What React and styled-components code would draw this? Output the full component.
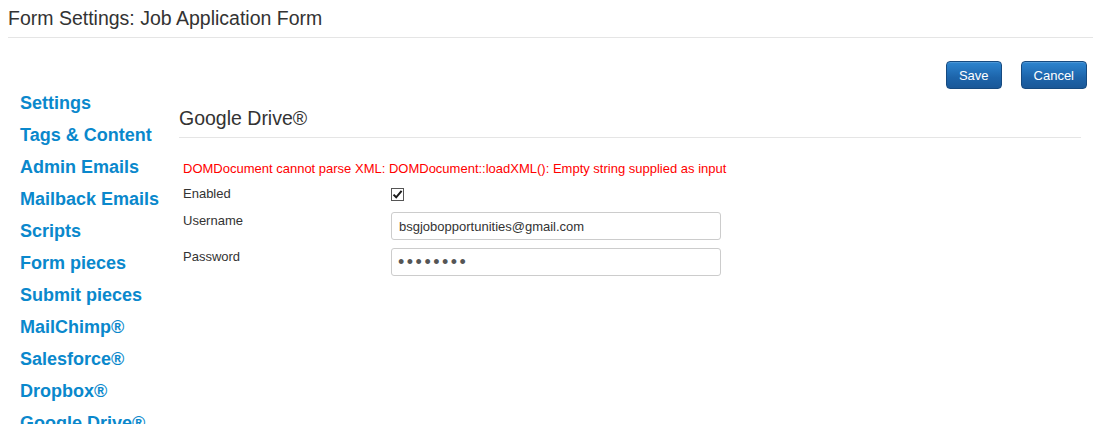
import React from "react";
import styled, { createGlobalStyle } from "styled-components";

const GlobalStyle = createGlobalStyle`
  html, body { background: #ffffff; }
  body {
    margin: 8px;
    font-family: "Liberation Sans", Arial, sans-serif;
    color: #333333;
  }
  * { box-sizing: border-box; }
`;

const Page = styled.div`
  display: flex;
  flex-direction: column;
`;

const PageTitle = styled.h1`
  margin: 0;
  font-size: 19.5px;
  font-weight: normal;
  line-height: 21px;
  color: #333333;
  padding-bottom: 8px;
  border-bottom: 1px solid #e5e5e5;
`;

const Toolbar = styled.div`
  display: flex;
  justify-content: flex-end;
  gap: 19px;
  margin-top: 23px;
  padding-right: 6px;
`;

const Button = styled.button`
  height: 28px;
  padding: 0 12px;
  font-family: "Liberation Sans", Arial, sans-serif;
  font-size: 13px;
  color: #ffffff;
  border: 1px solid #164a80;
  border-radius: 4px;
  background: linear-gradient(to bottom, #2d85d0 0%, #1d64aa 60%, #1a5898 100%);
  box-shadow: inset 0 1px 0 rgba(255, 255, 255, 0.15);
  cursor: pointer;
`;

const Body = styled.div`
  display: flex;
  align-items: flex-start;
  margin-top: -2px;
  padding-left: 12px;
  padding-right: 12px;
`;

const Nav = styled.nav`
  display: flex;
  flex-direction: column;
  width: 159px;
  flex: none;
`;

const NavLink = styled.a`
  display: block;
  font-size: 18px;
  font-weight: bold;
  line-height: 32px;
  color: #0a88cc;
  text-decoration: none;
  white-space: nowrap;
`;

const Main = styled.section`
  flex: 1;
  display: flex;
  flex-direction: column;
  padding-top: 21px;
`;

const SectionTitle = styled.h2`
  margin: 0;
  font-size: 19.5px;
  font-weight: normal;
  line-height: 21px;
  color: #333333;
  padding-bottom: 8px;
  border-bottom: 1px solid #e5e5e5;
`;

const Form = styled.div`
  display: flex;
  flex-direction: column;
  padding: 22px 0 0 4px;
`;

const ErrorText = styled.div`
  font-size: 13px;
  line-height: 18px;
  color: #ff0000;
  margin-bottom: 7px;
`;

const Row = styled.div`
  display: grid;
  grid-template-columns: 208px 330px;
  align-items: start;
  min-height: ${(p) => p.$minH || 0}px;
  margin-bottom: 8px;
`;

const Label = styled.label`
  font-size: 13px;
  line-height: 18px;
  color: #333333;
`;

const CheckBox = styled.span`
  display: inline-flex;
  align-items: center;
  justify-content: center;
  width: 13px;
  height: 13px;
  margin-top: 3px;
  border: 1px solid #555555;
  background: #ffffff;
`;

const Input = styled.input`
  width: 330px;
  height: 28px;
  padding: 0 7px;
  font-family: "Liberation Sans", Arial, sans-serif;
  font-size: 13px;
  color: #333333;
  border: 1px solid #cccccc;
  border-radius: 3px;
  background: #ffffff;
  outline: none;
  &[type="password"] {
    font-size: 18px;
    letter-spacing: 2.5px;
    padding-left: 6px;
    color: #555555;
  }
`;

const navItems = [
  "Settings",
  "Tags & Content",
  "Admin Emails",
  "Mailback Emails",
  "Scripts",
  "Form pieces",
  "Submit pieces",
  "MailChimp®",
  "Salesforce®",
  "Dropbox®",
  "Google Drive®",
];

export default function App() {
  return (
    <Page>
      <GlobalStyle />
      <PageTitle>Form Settings: Job Application Form</PageTitle>
      <Toolbar>
        <Button>Save</Button>
        <Button>Cancel</Button>
      </Toolbar>
      <Body>
        <Nav>
          {navItems.map((item) => (
            <NavLink href="#" key={item}>
              {item}
            </NavLink>
          ))}
        </Nav>
        <Main>
          <SectionTitle>Google Drive®</SectionTitle>
          <Form>
            <ErrorText>
              DOMDocument cannot parse XML: DOMDocument::loadXML(): Empty string supplied as input
            </ErrorText>
            <Row $minH={19}>
              <Label>Enabled</Label>
              <CheckBox role="checkbox" aria-checked="true">
                <svg width="11" height="11" viewBox="0 0 11 11">
                  <path
                    d="M1.5 5.6 L4.2 8.3 L9.6 1.8"
                    fill="none"
                    stroke="#1a1a1a"
                    strokeWidth="2"
                  />
                </svg>
              </CheckBox>
            </Row>
            <Row>
              <Label>Username</Label>
              <Input type="text" defaultValue="bsgjobopportunities@gmail.com" />
            </Row>
            <Row>
              <Label>Password</Label>
              <Input type="password" defaultValue="xxxxxxxx" />
            </Row>
          </Form>
        </Main>
      </Body>
    </Page>
  );
}
